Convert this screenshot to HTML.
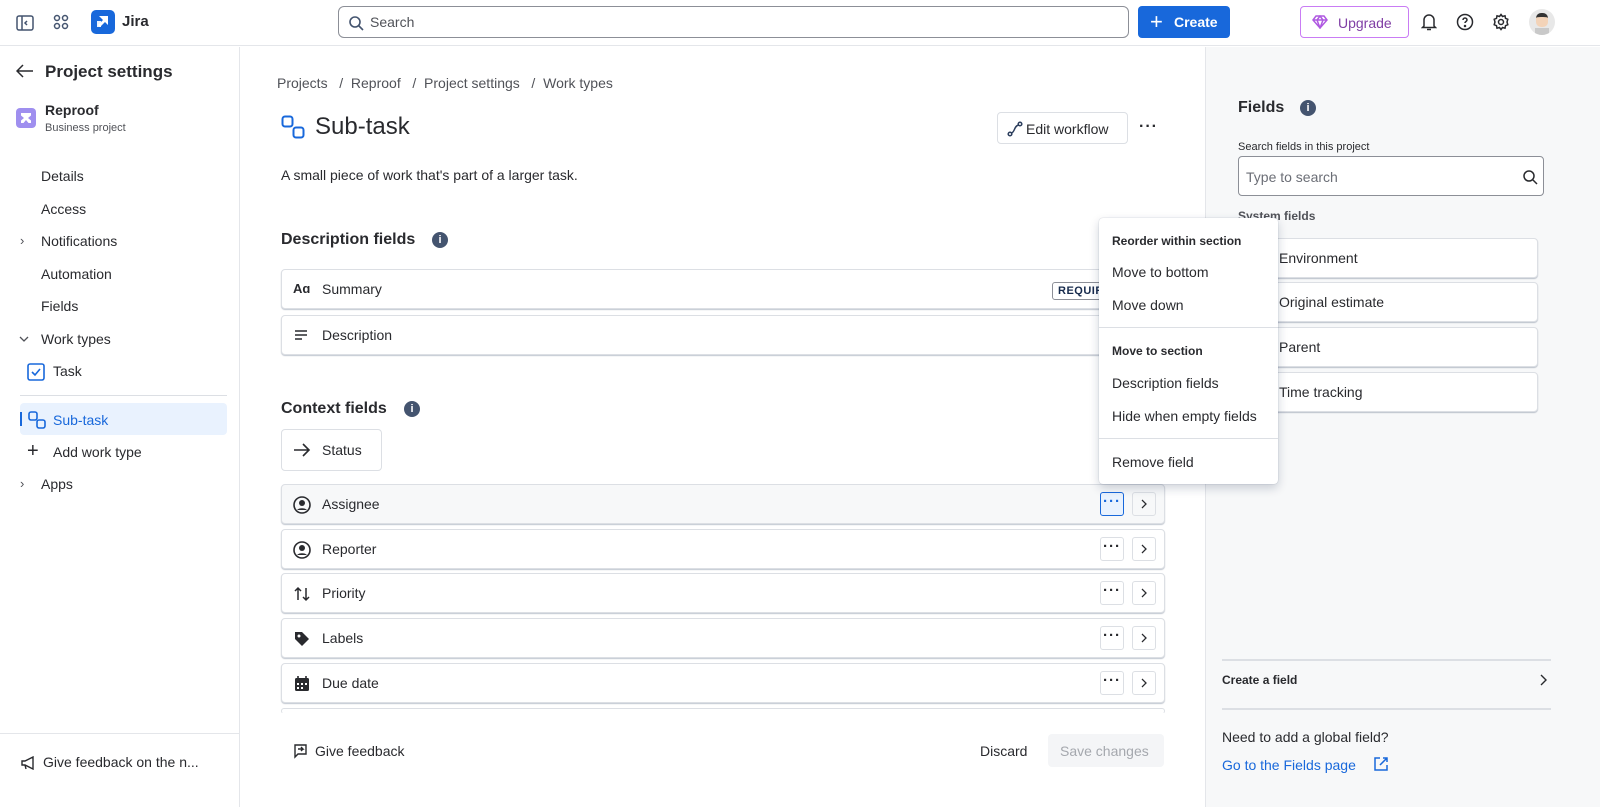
<!DOCTYPE html>
<html><head><meta charset="utf-8"><style>
*{box-sizing:border-box;margin:0;padding:0}
body{width:1600px;height:807px;overflow:hidden;font-family:"Liberation Sans",Arial,sans-serif;color:#172b4d;background:#fff;position:relative;font-size:14px}
.a{position:absolute}
.top{left:0;top:0;width:1600px;height:46px;border-bottom:1px solid #e4e6ea}
.side{left:0;top:47px;width:240px;height:760px;border-right:1px solid #e4e6ea}
.nav{position:absolute;left:41px;font-size:14px;color:#292a2e}
.row{position:absolute;left:281px;width:884px;height:40px;border:1px solid #dcdfe4;border-radius:4px;box-shadow:0 1px 1px rgba(9,30,66,.25);background:#fff}
.row span{position:absolute;left:40px;top:11px;font-size:14px;color:#292a2e}
.row svg{position:absolute;left:11px;top:11px}
.row .chev svg{position:static;display:block}
.dot{position:absolute;width:24px;height:24px;border:1px solid #dcdfe4;border-radius:3px;text-align:center;font-size:15px;line-height:18px;font-weight:bold;letter-spacing:1px;color:#292a2e}
.chev{position:absolute;width:24px;height:24px;border:1px solid #dcdfe4;border-radius:3px}
.rp{left:1205px;top:47px;width:395px;height:760px;background:#f7f8f9;border-left:1px solid #e4e6ea}
.fr{position:absolute;left:1238px;width:300px;height:40px;background:#fff;border:1px solid #dcdfe4;border-radius:4px;box-shadow:0 1px 1px rgba(9,30,66,.25);font-size:14px;color:#292a2e;padding:11px 0 0 40px}
.menu{left:1099px;top:218px;width:179px;height:266px;background:#fff;border-radius:4px;box-shadow:0 4px 10px rgba(9,30,66,.2),0 0 1px rgba(9,30,66,.3)}
.mi{position:absolute;left:13px;font-size:14px;color:#292a2e}
.mh{position:absolute;left:13px;font-size:12px;font-weight:bold;color:#292a2e}
</style></head><body>
<div class="a top">
 <svg class="a" style="left:16px;top:14px" width="18" height="18" viewBox="0 0 18 18" fill="none" stroke="#44546f" stroke-width="1.5"><rect x="1" y="2" width="16" height="14" rx="2"/><path d="M6 2v14M11 7l-2 2 2 2"/></svg>
 <svg class="a" style="left:53px;top:14px" width="16" height="16" viewBox="0 0 16 16" fill="none" stroke="#44546f" stroke-width="1.5"><circle cx="4" cy="4" r="2.5"/><circle cx="12" cy="4" r="2.5"/><circle cx="4" cy="12" r="2.5"/><circle cx="12" cy="12" r="2.5"/></svg>
 <div class="a" style="left:91px;top:10px;width:24px;height:24px;background:#1868db;border-radius:5px"><svg width="24" height="24" viewBox="0 0 24 24" fill="#fff"><path d="M8 6h9v9l-3-3-5 5-2-2 5-5z"/><path d="M6 11h4v6H6z" opacity=".9"/></svg></div>
 <div class="a" style="left:122px;top:13px;font-size:15px;font-weight:bold;color:#292a2e">Jira</div>
 <div class="a" style="left:338px;top:6px;width:791px;height:32px;border:1px solid #8c8f97;border-radius:6px"><svg class="a" style="left:9px;top:8px" width="16" height="16" viewBox="0 0 16 16" fill="none" stroke="#44546f" stroke-width="1.6"><circle cx="7" cy="7" r="5"/><path d="M11 11l4 4"/></svg><span class="a" style="left:31px;top:7px;color:#505258;font-size:14px">Search</span></div>
 <div class="a" style="left:1138px;top:6px;width:92px;height:32px;background:#1868db;border-radius:4px;color:#fff;font-size:14px;font-weight:bold;padding:8px 0 0 36px">Create<span class="a" style="left:12px;top:3px;font-size:22px;font-weight:normal">+</span></div>
 <div class="a" style="left:1300px;top:6px;width:109px;height:32px;border:1px solid #c97cf4;border-radius:4px;color:#803fa5;font-size:14px;padding:8px 0 0 37px">Upgrade<svg class="a" style="left:11px;top:8px" width="16" height="14" viewBox="0 0 16 14" fill="none" stroke="#af59e1" stroke-width="1.5"><path d="M1 5l3-4h8l3 4-7 8z M1 5h14M8 13L5 5l3-4 3 4z"/></svg></div>
 <svg class="a" style="left:1421px;top:13px" width="16" height="18" viewBox="0 0 16 18" fill="none" stroke="#292a2e" stroke-width="1.5"><path d="M3 13V7a5 5 0 0110 0v6l1.5 1.5h-13zM6 16.5h4"/></svg>
 <svg class="a" style="left:1456px;top:13px" width="18" height="18" viewBox="0 0 18 18" fill="none" stroke="#292a2e" stroke-width="1.5"><circle cx="9" cy="9" r="7.5"/><path d="M7 7a2 2 0 114 0c0 1.5-2 1.5-2 3"/><circle cx="9" cy="13" r=".5" fill="#292a2e"/></svg>
 <svg class="a" style="left:1492px;top:13px" width="18" height="18" viewBox="0 0 18 18" fill="none" stroke="#292a2e" stroke-width="1.5"><circle cx="9" cy="9" r="2.5"/><path d="M9 1.5l1.5 2 2.5-.7.5 2.5 2.3 1L15 9l.8 2.7-2.3 1-.5 2.5-2.5-.7L9 16.5l-1.5-2-2.5.7-.5-2.5-2.3-1L3 9l-.8-2.7 2.3-1 .5-2.5 2.5.7z"/></svg>
 <div class="a" style="left:1529px;top:9px;width:26px;height:26px;border-radius:50%;background:#e8e8e8;overflow:hidden"><div class="a" style="left:7px;top:4px;width:12px;height:14px;background:#f3d3b8;border-radius:5px;border-top:4px solid #333"></div><div class="a" style="left:6px;top:19px;width:14px;height:8px;background:#c9c9c9"></div></div>
</div>

<div class="a side">
 <svg class="a" style="left:16px;top:17px" width="18" height="14" viewBox="0 0 18 14" fill="none" stroke="#292a2e" stroke-width="1.5"><path d="M17 7H2M7 1L1 7l6 6"/></svg>
 <div class="a" style="left:45px;top:15px;font-size:17px;font-weight:bold;color:#292a2e">Project settings</div>
 <div class="a" style="left:16px;top:61px;width:20px;height:20px;background:#9f8fef;border-radius:4px"><svg width="20" height="20" viewBox="0 0 20 20" fill="#fff"><path d="M5 5h10v2.5L12 10l3 2.5V15h-2.5l-2.5-3-2.5 3H5v-2.5L8 10 5 7.5z"/></svg></div>
 <div class="a" style="left:45px;top:55px;font-size:14px;font-weight:bold;color:#292a2e">Reproof</div>
 <div class="a" style="left:45px;top:75px;font-size:11px;color:#505258">Business project</div>
 <div class="nav" style="top:121px">Details</div>
 <div class="nav" style="top:154px">Access</div>
 <div class="a" style="left:20px;top:186px;font-size:13px;color:#505258">›</div><div class="nav" style="top:186px">Notifications</div>
 <div class="nav" style="top:219px">Automation</div>
 <div class="nav" style="top:251px">Fields</div>
 <svg class="a" style="left:19px;top:289px" width="10" height="6" viewBox="0 0 10 6" fill="none" stroke="#505258" stroke-width="1.3"><path d="M1 1l4 4 4-4"/></svg><div class="nav" style="top:284px">Work types</div>
 <svg class="a" style="left:27px;top:316px" width="18" height="18" viewBox="0 0 18 18" fill="none" stroke="#1868db" stroke-width="1.6"><rect x="1" y="1" width="16" height="16" rx="2"/><path d="M5 9l3 3 5-6"/></svg>
 <div class="nav" style="left:53px;top:316px">Task</div>
 <div class="a" style="left:20px;top:348px;width:207px;height:1px;background:#dcdfe4"></div>
 <div class="a" style="left:20px;top:356px;width:207px;height:32px;background:#e9f2fe;border-radius:4px"></div>
 <div class="a" style="left:20px;top:365px;width:2px;height:14px;background:#1868db"></div>
 <svg class="a" style="left:28px;top:364px" width="18" height="18" viewBox="0 0 18 18" fill="none" stroke="#1868db" stroke-width="1.6"><rect x="1" y="1" width="8" height="8" rx="2"/><rect x="9" y="9" width="8" height="8" rx="2"/></svg>
 <div class="nav" style="left:53px;top:365px;color:#1868db">Sub-task</div>
 <div class="a" style="left:27px;top:393px;font-size:20px;color:#292a2e">+</div><div class="nav" style="left:53px;top:397px">Add work type</div>
 <div class="a" style="left:20px;top:429px;font-size:13px;color:#505258">›</div><div class="nav" style="top:429px">Apps</div>
 <div class="a" style="left:0;top:686px;width:239px;height:1px;background:#e4e6ea"></div>
 <svg class="a" style="left:21px;top:709px" width="16" height="14" viewBox="0 0 16 14" fill="none" stroke="#292a2e" stroke-width="1.4"><path d="M1 5h3l8-4v12L4 9H1zM4 9l1 4"/></svg>
 <div class="a" style="left:43px;top:707px;font-size:14px;color:#292a2e">Give feedback on the n...</div>
</div>

<div class="a" style="left:277px;top:75px;font-size:14px;color:#505258">Projects &nbsp; / &nbsp;Reproof &nbsp; / &nbsp;Project settings &nbsp; / &nbsp;Work types</div>
<svg class="a" style="left:281px;top:115px" width="24" height="24" viewBox="0 0 24 24" fill="none" stroke="#1868db" stroke-width="2"><rect x="1.5" y="1.5" width="10" height="10" rx="2.5"/><rect x="12.5" y="12.5" width="10" height="10" rx="2.5"/></svg>
<div class="a" style="left:315px;top:113px;font-size:24px;color:#292a2e">Sub-task</div>
<div class="a" style="left:997px;top:112px;width:131px;height:32px;border:1px solid #dcdfe4;border-radius:4px;font-size:14px;color:#292a2e;padding:8px 0 0 28px">Edit workflow<svg class="a" style="left:9px;top:8px" width="16" height="16" viewBox="0 0 16 16" fill="none" stroke="#2c3e5d" stroke-width="1.5"><circle cx="3" cy="13" r="1.8"/><circle cx="13" cy="3" r="1.8"/><path d="M4.5 12C8 11 7 5 11.5 4"/></svg></div>
<div class="a" style="left:1139px;top:118px;font-size:16px;font-weight:bold;letter-spacing:1px;color:#292a2e">···</div>
<div class="a" style="left:281px;top:167px;font-size:14px;color:#292a2e">A small piece of work that's part of a larger task.</div>

<div class="a" style="left:281px;top:231px;font-size:16px;font-weight:bold;color:#292a2e">Description fields</div>
<div class="a" style="left:432px;top:232px;width:16px;height:16px;border-radius:50%;background:#44546f;color:#fff;font-size:11px;font-weight:bold;text-align:center;line-height:16px">i</div>
<div class="row" style="top:269px"><div class="a" style="left:11px;top:11px;font-size:13px;font-weight:bold;color:#292a2e">Aɑ</div><span>Summary</span><div class="a" style="left:770px;top:12px;width:120px;height:18px;border:1px solid #8c8f97;border-radius:3px;font-size:11px;font-weight:bold;padding:2px 0 0 5px;letter-spacing:.5px">REQUIRED</div></div>
<div class="row" style="top:315px"><svg width="16" height="16" viewBox="0 0 16 16" stroke="#292a2e" stroke-width="1.6"><path d="M2 4h12M2 8h12M2 12h7"/></svg><span>Description</span></div>

<div class="a" style="left:281px;top:400px;font-size:16px;font-weight:bold;color:#292a2e">Context fields</div>
<div class="a" style="left:404px;top:401px;width:16px;height:16px;border-radius:50%;background:#44546f;color:#fff;font-size:11px;font-weight:bold;text-align:center;line-height:16px">i</div>
<div class="a" style="left:281px;top:429px;width:101px;height:42px;border:1px solid #dcdfe4;border-radius:4px"><svg class="a" style="left:11px;top:12px" width="18" height="16" viewBox="0 0 18 16" fill="none" stroke="#292a2e" stroke-width="1.6"><path d="M1 8h15M10 2l6 6-6 6"/></svg><span class="a" style="left:40px;top:12px;font-size:14px;color:#292a2e">Status</span></div>

<div class="row" style="top:484px;background:#f7f8f9"><svg width="18" height="18" viewBox="0 0 18 18"><circle cx="9" cy="9" r="8" fill="none" stroke="#292a2e" stroke-width="1.6"/><circle cx="9" cy="7" r="3" fill="#292a2e"/><path d="M4 14a6 4 0 0110 0" fill="#292a2e"/></svg><span>Assignee</span><div class="dot" style="left:818px;top:7px;border-color:#1868db;background:#e9f2fe;color:#1868db">···</div><div class="chev" style="left:850px;top:7px"><svg width="22" height="22" viewBox="0 0 22 22" fill="none" stroke="#292a2e" stroke-width="1.3"><path d="M9 7l4 4-4 4"/></svg></div></div>
<div class="row" style="top:529px"><svg width="18" height="18" viewBox="0 0 18 18"><circle cx="9" cy="9" r="8" fill="none" stroke="#292a2e" stroke-width="1.6"/><circle cx="9" cy="7" r="3" fill="#292a2e"/><path d="M4 14a6 4 0 0110 0" fill="#292a2e"/></svg><span>Reporter</span><div class="dot" style="left:818px;top:7px">···</div><div class="chev" style="left:850px;top:7px"><svg width="22" height="22" viewBox="0 0 22 22" fill="none" stroke="#292a2e" stroke-width="1.3"><path d="M9 7l4 4-4 4"/></svg></div></div>
<div class="row" style="top:573px"><svg width="18" height="18" viewBox="0 0 18 18" fill="none" stroke="#292a2e" stroke-width="1.5"><path d="M5 15V3M2 6l3-3 3 3M13 3v12M10 12l3 3 3-3"/></svg><span>Priority</span><div class="dot" style="left:818px;top:7px">···</div><div class="chev" style="left:850px;top:7px"><svg width="22" height="22" viewBox="0 0 22 22" fill="none" stroke="#292a2e" stroke-width="1.3"><path d="M9 7l4 4-4 4"/></svg></div></div>
<div class="row" style="top:618px"><svg width="18" height="18" viewBox="0 0 18 18"><path d="M2 2h7l7 7-7 7-7-7z" fill="#292a2e"/><circle cx="6" cy="6" r="1.5" fill="#fff"/></svg><span>Labels</span><div class="dot" style="left:818px;top:7px">···</div><div class="chev" style="left:850px;top:7px"><svg width="22" height="22" viewBox="0 0 22 22" fill="none" stroke="#292a2e" stroke-width="1.3"><path d="M9 7l4 4-4 4"/></svg></div></div>
<div class="row" style="top:663px"><svg width="18" height="18" viewBox="0 0 18 18"><rect x="2" y="3" width="14" height="13" rx="1.5" fill="#292a2e"/><path d="M5 1v3M13 1v3" stroke="#292a2e" stroke-width="1.6"/><rect x="4" y="8" width="2" height="2" fill="#fff"/><rect x="8" y="8" width="2" height="2" fill="#fff"/><rect x="12" y="8" width="2" height="2" fill="#fff"/><rect x="4" y="12" width="2" height="2" fill="#fff"/><rect x="8" y="12" width="2" height="2" fill="#fff"/></svg><span>Due date</span><div class="dot" style="left:818px;top:7px">···</div><div class="chev" style="left:850px;top:7px"><svg width="22" height="22" viewBox="0 0 22 22" fill="none" stroke="#292a2e" stroke-width="1.3"><path d="M9 7l4 4-4 4"/></svg></div></div>
<div class="row" style="top:708px;height:6px;border-bottom:none;box-shadow:none"></div>
<div class="a" style="left:240px;top:713px;width:965px;height:94px;background:#fff"></div>

<svg class="a" style="left:292px;top:743px" width="16" height="16" viewBox="0 0 16 16" fill="none" stroke="#292a2e" stroke-width="1.4"><path d="M3 14V2h11v9H6zM6 6h5l-2-2M11 6l-2 2"/></svg>
<div class="a" style="left:315px;top:743px;font-size:14px;color:#292a2e">Give feedback</div>
<div class="a" style="left:980px;top:743px;font-size:14px;color:#292a2e">Discard</div>
<div class="a" style="left:1048px;top:734px;width:116px;height:33px;background:#f4f5f7;border-radius:4px;font-size:14px;color:#a5a8ae;padding:9px 0 0 12px">Save changes</div>

<div class="a rp">
 <div class="a" style="left:32px;top:52px;font-size:16px;font-weight:bold;color:#292a2e">Fields</div>
 <div class="a" style="left:94px;top:53px;width:16px;height:16px;border-radius:50%;background:#44546f;color:#fff;font-size:11px;font-weight:bold;text-align:center;line-height:16px">i</div>
 <div class="a" style="left:32px;top:94px;font-size:11px;color:#292a2e">Search fields in this project</div>
 <div class="a" style="left:32px;top:109px;width:306px;height:40px;border:1px solid #8c8f97;border-radius:4px;background:#fff"><span class="a" style="left:7px;top:12px;font-size:14px;color:#6b6e76">Type to search</span><svg class="a" style="left:283px;top:12px" width="16" height="16" viewBox="0 0 16 16" fill="none" stroke="#292a2e" stroke-width="1.5"><circle cx="7" cy="7" r="5"/><path d="M11 11l4 4"/></svg></div>
 <div class="a" style="left:32px;top:162px;font-size:12px;font-weight:bold;color:#505258">System fields</div>
 <div class="a" style="left:16px;top:612px;width:329px;height:2px;background:#dcdfe4"></div>
 <div class="a" style="left:16px;top:626px;font-size:12px;font-weight:bold;color:#292a2e">Create a field</div>
 <svg class="a" style="left:332px;top:626px" width="10" height="14" viewBox="0 0 10 14" fill="none" stroke="#292a2e" stroke-width="1.4"><path d="M3 2l5 5-5 5"/></svg>
 <div class="a" style="left:16px;top:661px;width:329px;height:2px;background:#dcdfe4"></div>
 <div class="a" style="left:16px;top:682px;font-size:14px;color:#292a2e">Need to add a global field?</div>
 <div class="a" style="left:16px;top:710px;font-size:14px;color:#1868db">Go to the Fields page</div>
 <svg class="a" style="left:167px;top:709px" width="16" height="16" viewBox="0 0 16 16" fill="none" stroke="#1868db" stroke-width="1.5"><path d="M7 2H2v12h12V9M10 2h4v4M14 2L7 9"/></svg>
</div>
<div class="fr" style="top:238px">Environment</div>
<div class="fr" style="top:282px">Original estimate</div>
<div class="fr" style="top:327px">Parent</div>
<div class="fr" style="top:372px">Time tracking</div>

<div class="a menu">
 <div class="mh" style="top:16px">Reorder within section</div>
 <div class="mi" style="top:46px">Move to bottom</div>
 <div class="mi" style="top:79px">Move down</div>
 <div class="a" style="left:0;top:109px;width:179px;height:1px;background:#dcdfe4"></div>
 <div class="mh" style="top:126px">Move to section</div>
 <div class="mi" style="top:157px">Description fields</div>
 <div class="mi" style="top:190px">Hide when empty fields</div>
 <div class="a" style="left:0;top:220px;width:179px;height:1px;background:#dcdfe4"></div>
 <div class="mi" style="top:236px">Remove field</div>
</div>
</body></html>
